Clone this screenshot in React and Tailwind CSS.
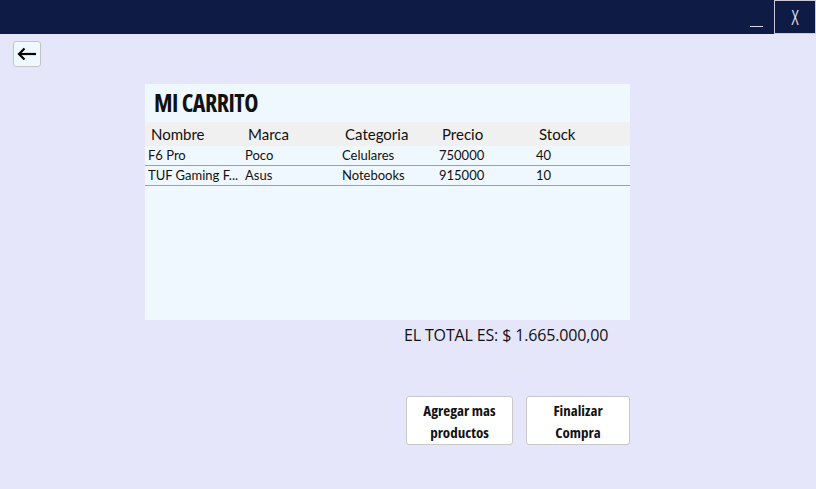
import { useState } from "react";

const rows = [
  { nombre: "F6 Pro", marca: "Poco", categoria: "Celulares", precio: "750000", stock: "40" },
  { nombre: "TUF Gaming F...", marca: "Asus", categoria: "Notebooks", precio: "915000", stock: "10" },
];

const columns = ["Nombre", "Marca", "Categoria", "Precio", "Stock"];

const gothic = { fontFamily: "'URW Gothic', 'Century Gothic', Lato, sans-serif" };

export default function App() {
  const [items] = useState(rows);

  return (
    <div className="w-[816px] h-[489px] flex flex-col bg-[#e6e6fa] overflow-hidden font-['Open_Sans',sans-serif]">
      {/* barra de ventana */}
      <div className="h-[34px] bg-[#0d1b45] flex justify-end items-stretch shrink-0">
        <button className="w-[28px] flex items-end justify-center pb-[6px] text-[#e8e8f0] text-[14px] leading-none mr-[4px]">
          <span className="block w-[13px] h-[1px] bg-[#d8d8e8] mb-[1px]"></span>
        </button>
        <button className="w-[42px] border border-[#c8c8d8] text-[#f4f4ff] text-[21px] leading-none flex items-center justify-center font-['Open_Sans',sans-serif] font-light [font-stretch:semi-condensed]">
          X
        </button>
      </div>

      <div className="pl-[13px] pt-[7px]">
        <button className="w-[28px] h-[26px] rounded-[3px] border border-[#c4c4c4] bg-[#f0f8ff] flex items-center justify-center">
          <svg width="20" height="14" viewBox="0 0 20 14" fill="none" stroke="#000" strokeWidth="2.2">
            <path d="M19 7H2" />
            <path d="M7.5 1.5L2 7l5.5 5.5" />
          </svg>
        </button>
      </div>

      <div className="ml-[145px] mt-[17px] w-[485px] h-[236px] bg-[#f0f8ff] flex flex-col">
        <div className="h-[38px] pl-[9px] flex items-center">
          <h1 className="text-[24px] leading-none font-bold text-[#111] tracking-[-0.5px] [font-stretch:condensed] font-['Open_Sans',sans-serif]">
            MI CARRITO
          </h1>
        </div>
        <div className="h-[24px] bg-[#f0f0f0] flex items-center text-[15px] text-[#111]" style={gothic}>
          {columns.map((c) => (
            <div key={c} className="w-[97px] pl-[6px]">
              {c}
            </div>
          ))}
        </div>
        {items.map((r) => (
          <div
            key={r.nombre}
            className="h-[20px] border-b border-[#a0a0a0] flex items-center text-[13px] text-[#111]"
            style={gothic}
          >
            <div className="w-[97px] pl-[3px] whitespace-nowrap">{r.nombre}</div>
            <div className="w-[97px] pl-[3px]">{r.marca}</div>
            <div className="w-[97px] pl-[3px]">{r.categoria}</div>
            <div className="w-[97px] pl-[3px]">{r.precio}</div>
            <div className="w-[97px] pl-[3px]">{r.stock}</div>
          </div>
        ))}
      </div>

      <div className="ml-[404px] mt-[4px] text-[16px] leading-[22px] text-[#111] tracking-[-0.15px]">EL TOTAL ES: $ 1.665.000,00</div>

      <div className="ml-[406px] mt-[50px] flex gap-[13px]">
        <button className="w-[107px] h-[49px] bg-white border border-[#c8c8c8] rounded-[3px] text-[15px] leading-[22px] font-bold text-[#111] [font-stretch:condensed]">
          Agregar mas
          <br />
          productos
        </button>
        <button className="w-[104px] h-[49px] bg-white border border-[#c8c8c8] rounded-[3px] text-[15px] leading-[22px] font-bold text-[#111] [font-stretch:condensed]">
          Finalizar
          <br />
          Compra
        </button>
      </div>
    </div>
  );
}
